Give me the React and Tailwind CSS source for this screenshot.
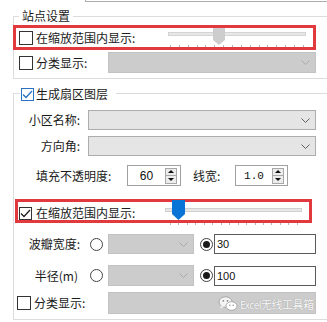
import React from "react";

const Box = ({ className = "", checked, tone = "dark" }) => {
  const border = tone === "blue" ? "border-[#2a72c2]" : "border-[#333333]";
  const stroke = tone === "blue" ? "#2a72c2" : "#222222";
  return (
    <span className={`flex items-center justify-center shrink-0 bg-white border ${border} ${className}`}>
      {checked && (
        <svg width="11" height="9" viewBox="0 0 11 9">
          <polyline points="1,4.5 4,7.5 10,1" fill="none" stroke={stroke} strokeWidth="1.3" />
        </svg>
      )}
    </span>
  );
};

const Chevron = ({ disabled }) => (
  <svg width="9" height="5" viewBox="0 0 9 5">
    <polyline
      points="0.5,0.5 4.5,4.5 8.5,0.5"
      fill="none"
      stroke={disabled ? "#a9a9a9" : "#606060"}
      strokeWidth="1"
    />
  </svg>
);

const Combo = ({ className = "", disabled, children }) => (
  <div
    className={`relative flex items-center justify-end pr-[5px] shrink-0 border ${
      disabled ? "bg-[#cccccc] border-[#c2c2c2]" : "bg-[#e5e5e5] border-[#adadad]"
    } ${className}`}
  >
    <Chevron disabled={disabled} />
    {children}
  </div>
);

const Spin = ({ value, className = "", mono }) => (
  <div className={`h-[21px] shrink-0 border border-[#a0a0a0] bg-white flex items-center ${className}`}>
    <span
      className={`flex-1 text-center text-[#111] ${
        mono ? "font-['Liberation_Mono',monospace] text-[11px]" : "font-['Liberation_Sans',sans-serif] text-[12px]"
      }`}
    >
      {value}
    </span>
    <div className="w-[12px] h-[16px] mr-[3px] flex flex-col border border-[#a8a8a8]">
      <div className="flex-1 flex items-center justify-center bg-[#ececec] border-b border-[#a8a8a8]">
        <svg width="6" height="3" viewBox="0 0 6 3">
          <polygon points="0,3 6,3 3,0" fill="#111" />
        </svg>
      </div>
      <div className="flex-1 flex items-center justify-center bg-[#ececec]">
        <svg width="6" height="3" viewBox="0 0 6 3">
          <polygon points="0,0 6,0 3,3" fill="#111" />
        </svg>
      </div>
    </div>
  </div>
);

const Radio = ({ checked }) => (
  <span className="w-[13px] h-[13px] shrink-0 rounded-full border border-[#444] bg-white flex items-center justify-center">
    {checked && <span className="w-[7px] h-[7px] rounded-full bg-[#1a1a1a]" />}
  </span>
);

const Ticks = ({ className }) => (
  <div className={`absolute flex justify-between ${className}`}>
    {Array.from({ length: 16 }).map((_, i) => (
      <span key={i} className="w-[1px] h-[2px] bg-[#b5b5b5]" />
    ))}
  </div>
);

const WeChat = () => (
  <svg width="20" height="16" viewBox="0 0 20 16">
    <ellipse cx="7.5" cy="6" rx="6.5" ry="5.2" fill="#f4f4f4" stroke="#9a9a9a" strokeWidth="0.8" />
    <polygon points="3,9.5 2.5,12.5 6,10.8" fill="#f4f4f4" />
    <ellipse cx="13.5" cy="10" rx="5.5" ry="4.3" fill="#ffffff" stroke="#9a9a9a" strokeWidth="0.8" />
    <circle cx="5.3" cy="4.8" r="0.9" fill="#8a8a8a" />
    <circle cx="9.5" cy="4.8" r="0.9" fill="#8a8a8a" />
    <circle cx="11.8" cy="9.3" r="0.7" fill="#8a8a8a" />
    <circle cx="15.2" cy="9.3" r="0.7" fill="#8a8a8a" />
  </svg>
);

export default function App() {
  return (
    <div className="w-[327px] h-[322px] overflow-hidden bg-white text-[12px] leading-[14px] text-[#1a1a1a] font-['Noto_Sans_CJK_SC','Noto_Sans',sans-serif]">
      <div className="ml-[85px] w-[260px] h-[2px] border-l border-b border-[#adadad]" />

      {/* 站点设置 */}
      <div className="relative mt-[14px] ml-[13px] w-[340px] h-[63px] border border-[#dcdcdc]">
        <span className="absolute -top-[8px] left-[5px] px-[3px] bg-white">站点设置</span>

        <div className="-ml-[1px] mt-[8px] w-[303px] h-[25px] border-[3px] border-[#e2393f] flex items-center pl-[3px]">
          <Box className="w-[14px] h-[14px]" />
          <span className="ml-[3px] w-[130px]">在缩放范围内显示:</span>
          <div className="relative w-[142px] h-[19px]">
            <div className="absolute left-[2px] top-[4px] w-[138px] h-[4px] bg-[#e7e7e7] border border-[#d4d4d4]" />
            <svg className="absolute left-[47px] top-0" width="12" height="17" viewBox="0 0 12 17">
              <polygon points="0,0 12,0 12,12 6,17 0,12" fill="#cdcdcd" />
            </svg>
            <Ticks className="left-[4px] top-[17px] w-[134px]" />
          </div>
        </div>

        <div className="mt-[2px] flex items-center h-[21px]">
          <Box className="ml-[5px] w-[14px] h-[14px]" />
          <span className="ml-[3px] w-[72px]">分类显示:</span>
          <Combo disabled className="w-[208px] h-[21px]" />
        </div>
      </div>

      {/* 生成扇区图层 */}
      <div className="relative mt-[14px] ml-[13px] w-[340px] h-[227px] border border-[#dcdcdc]">
        <div className="absolute -top-[7px] left-[6px] pl-[1px] pr-[8px] bg-white flex items-center">
          <Box checked tone="blue" className="w-[13px] h-[13px]" />
          <span className="ml-[2px]">生成扇区图层</span>
        </div>

        <div className="mt-[16px] flex items-center h-[20px]">
          <span className="w-[66px] text-right">小区名称:</span>
          <Combo className="ml-[8px] w-[228px] h-[20px]" />
        </div>

        <div className="mt-[6px] flex items-center h-[20px]">
          <span className="w-[66px] text-right">方向角:</span>
          <Combo className="ml-[8px] w-[228px] h-[20px]" />
        </div>

        <div className="mt-[9px] flex items-center h-[21px]">
          <span className="ml-[22px] w-[91px]">填充不透明度:</span>
          <Spin value="60" className="w-[54px]" />
          <span className="ml-[12px] w-[42px]">线宽:</span>
          <Spin value="1.0" mono className="w-[53px]" />
        </div>

        <div className="ml-[1px] mt-[13px] w-[297px] h-[24px] border-[3px] border-[#e2393f] flex items-center pl-[1px] pt-[4px]">
          <Box checked className="w-[13px] h-[13px]" />
          <span className="ml-[4px] w-[128px]">在缩放范围内显示:</span>
          <div className="relative w-[140px] h-[14px]">
            <div className="absolute left-[1px] top-[2px] w-[137px] h-[4px] bg-[#e7e7e7] border border-[#d0d0d0]" />
            <svg className="absolute left-[8px] -top-[6px]" width="13" height="20" viewBox="0 0 13 20">
              <polygon points="0,0 13,0 13,14 6.5,20 0,14" fill="#0a74d6" />
            </svg>
            <Ticks className="left-[6px] top-[17px] w-[128px]" />
          </div>
        </div>

        <div className="mt-[11px] flex items-center h-[20px]">
          <span className="w-[66px] text-right">波瓣宽度:</span>
          <span className="ml-[10px]">
            <Radio />
          </span>
          <Combo disabled className="ml-[5px] w-[86px] h-[20px]" />
          <span className="ml-[6px]">
            <Radio checked />
          </span>
          <div className="ml-[1px] w-[102px] h-[20px] border border-[#5a5a5a] bg-white flex items-center pl-[2px] font-['Liberation_Sans',sans-serif] text-[11px] text-[#111]">
            30
          </div>
        </div>

        <div className="mt-[11px] flex items-center h-[21px]">
          <span className="w-[66px] text-right pr-[2px]">半径(m)</span>
          <span className="ml-[10px]">
            <Radio />
          </span>
          <Combo disabled className="ml-[5px] w-[86px] h-[21px]" />
          <span className="ml-[6px]">
            <Radio checked />
          </span>
          <div className="ml-[1px] w-[102px] h-[20px] border border-[#5a5a5a] bg-white flex items-center pl-[2px] font-['Liberation_Sans',sans-serif] text-[11px] text-[#111]">
            100
          </div>
        </div>

        <div className="mt-[6px] flex items-center h-[22px]">
          <Box className="ml-[3px] w-[14px] h-[14px]" />
          <span className="ml-[3px] w-[74px]">分类显示:</span>
          <div className="relative w-[208px] h-[22px] bg-[#cccccc] border border-[#c2c2c2]">
            <div className="absolute left-[109px] top-[3px] flex items-center gap-[2px]">
              <WeChat />
              <span className="whitespace-nowrap text-[#fafafa] [text-shadow:0_0_1px_#8a8a8a]">
                <span className="text-[10px] tracking-[-0.5px]">Excel</span>
                <span className="text-[11px] tracking-[-0.5px]">无线工具箱</span>
              </span>
            </div>
          </div>
        </div>
      </div>
    </div>
  );
}
